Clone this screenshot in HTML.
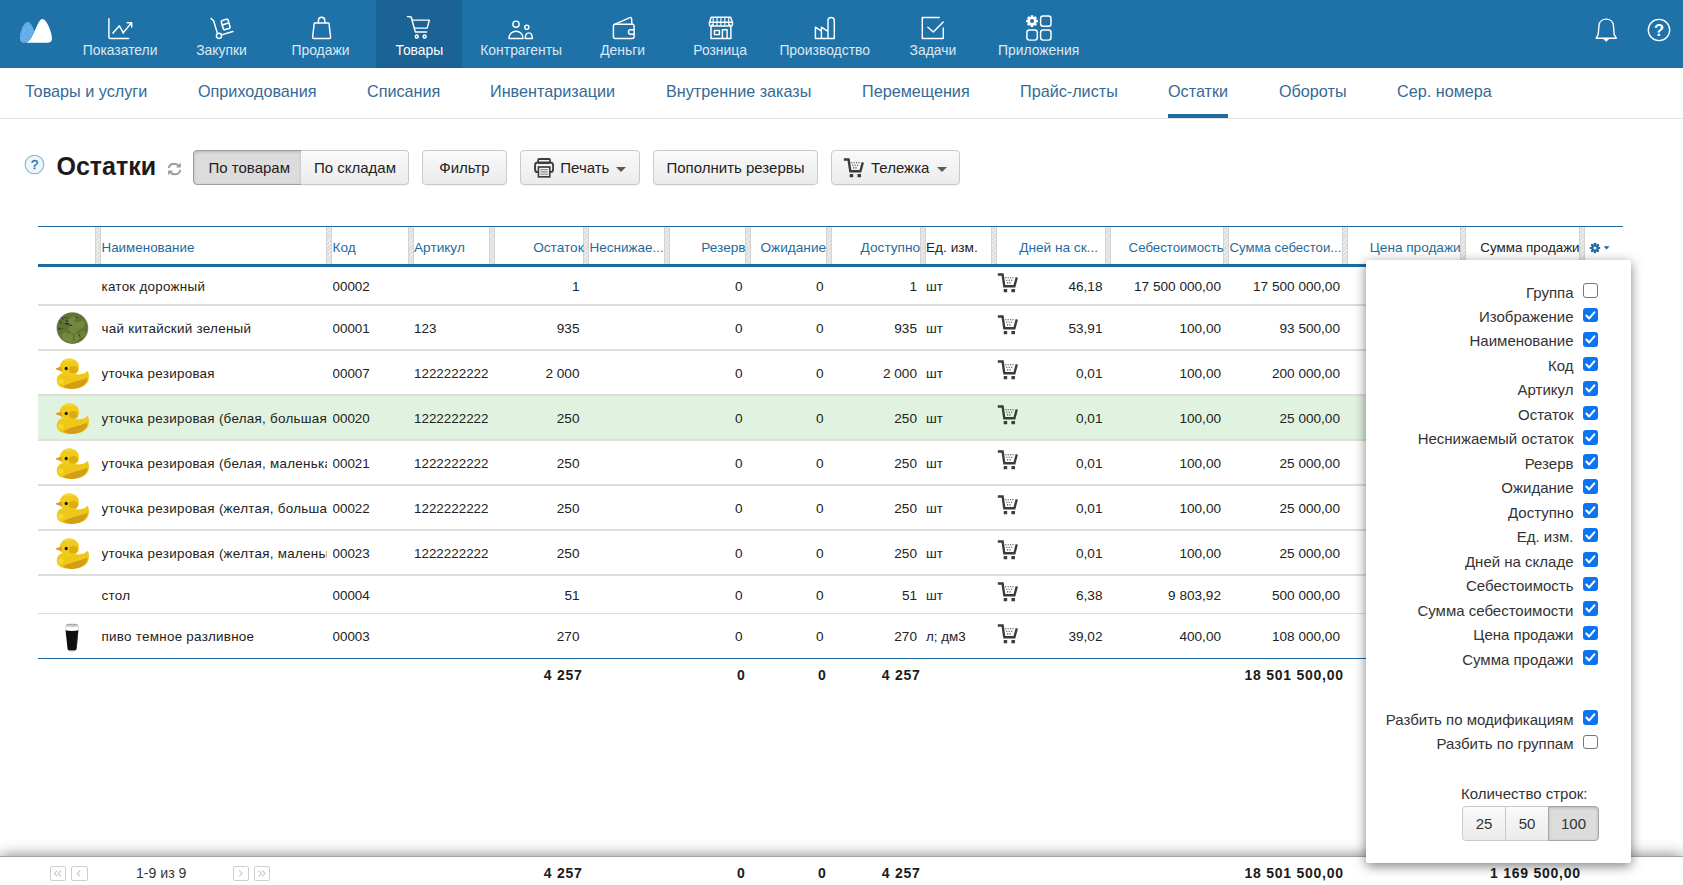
<!DOCTYPE html>
<html lang="ru">
<head>
<meta charset="utf-8">
<title>Остатки</title>
<style>
*{box-sizing:border-box}
html,body{margin:0;padding:0}
body{width:1683px;height:885px;overflow:hidden;background:#fff;font-family:"Liberation Sans",sans-serif;color:#222;position:relative}
/* ---------- top header ---------- */
#hdr{position:absolute;left:0;top:0;width:1683px;height:68px;background:#1f72a8}
.nl{position:absolute;top:42px;width:120px;height:16px;line-height:16px;color:#dbe9f3;font-size:13.9px;text-align:center;white-space:nowrap}
.nl.a{color:#fff}
#ico{position:absolute;left:0;top:0}
/* ---------- sub nav ---------- */
#sub{position:absolute;left:0;top:68px;width:1683px;height:51px;border-bottom:1px solid #e4e4e4;background:#fff}
#sub a{position:absolute;top:13px;font-size:16.2px;line-height:20px;color:#356a95;white-space:nowrap;text-decoration:none}
#sub i{position:absolute;left:1168px;top:46px;width:60px;height:4px;background:#1f6b9d}
/* ---------- toolbar ---------- */
#ttl{position:absolute;left:56.5px;top:151px;font-size:25px;font-weight:bold;line-height:30px;color:#1b1b1b}
.btn{position:absolute;top:150px;height:35px;border:1px solid #c9c9c9;border-radius:4px;background:linear-gradient(#fafafa,#ebebeb);font-size:15px;line-height:33px;color:#222;text-align:center;white-space:nowrap;box-shadow:0 1px 0 rgba(0,0,0,.04)}
.btn.on{background:#dcdcdc;border-color:#9d9d9d;box-shadow:inset 0 1px 3px rgba(0,0,0,.18)}
.caret{display:inline-block;width:0;height:0;border-left:5.6px solid transparent;border-right:5.6px solid transparent;border-top:5.4px solid #5a5a5a;vertical-align:middle;margin-left:6px;margin-top:2px}
/* ---------- table ---------- */
#tb{position:absolute;left:38px;top:226px;width:1585px;font-size:13.4px}
#th{position:absolute;left:0;top:0;width:1585px;height:41px;border-top:1px solid #1f6b9d;border-bottom:3px solid #1f6b9d}
.h{position:absolute;top:0;height:37px;line-height:42px;color:#1f6b9d;white-space:nowrap;overflow:hidden;font-size:13.65px}
.h.k{color:#222}
.sp{position:absolute;top:0;height:37px;width:6px;margin-left:-1px;border:1px solid #d3d3d3;border-top:0;border-bottom:0;background:repeating-linear-gradient(135deg,#efefef 0 1.3px,#dbdbdb 1.3px 2.6px)}
.r{position:absolute;left:0;width:1585px;border-bottom:2px solid #dedede}
.r.g{background:#e0f2e0}
.c{position:absolute;top:0;white-space:nowrap;overflow:hidden;color:#222}
.c.ra{font-size:13.6px}
.ra{text-align:right}
.tot{font-weight:bold;color:#1b1b1b;font-size:14px;letter-spacing:.75px;margin-right:-.75px}
/* ---------- popup ---------- */
#pop{position:absolute;left:1366px;top:260.4px;width:264.5px;height:603px;background:#fff;border:1px solid #fff;border-radius:2px;box-shadow:0 3px 12px rgba(0,0,0,.5);z-index:5}
.o{position:absolute;right:56px;font-size:15px;line-height:18px;color:#333;white-space:nowrap;text-align:right}
.cb{position:absolute;left:216px;width:14.6px;height:14.6px;border-radius:3px}
.cb.y{background:#0b74f0}
.cb.n{border:1.3px solid #767676;background:#fff}
.cb svg{position:absolute;left:0;top:0;width:14.6px;height:14.6px}
.nb{position:absolute;top:544.6px;height:35px;border:1px solid #c9c9c9;background:linear-gradient(#fafafa,#ebebeb);font-size:15px;line-height:33px;color:#333;text-align:center}
.nb.on{background:#dcdcdc;border-color:#a5a5a5;box-shadow:inset 0 1px 3px rgba(0,0,0,.18)}
.im{position:absolute}
/* ---------- footer ---------- */
#ft{position:absolute;left:0;top:857px;width:1683px;height:28px;background:#fff;border-top:1px solid #a3a3a3;margin-top:-1px;height:29px;box-shadow:0 0 15px rgba(0,0,0,.52);z-index:3}
#fsh{display:none}
.pg{position:absolute;top:8.5px;width:15.5px;height:15.5px;border:1px solid #cfcfcf;border-radius:2px;background:#fff}
</style>
</head>
<body>
<div id="hdr">
<div style="position:absolute;left:376px;top:0;width:86px;height:68px;background:#1b6394"></div>
<div class="nl" style="left:60.1px">Показатели</div>
<div class="nl" style="left:161.5px">Закупки</div>
<div class="nl" style="left:260.5px">Продажи</div>
<div class="nl a" style="left:359.4px">Товары</div>
<div class="nl" style="left:461.2px">Контрагенты</div>
<div class="nl" style="left:562.6px">Деньги</div>
<div class="nl" style="left:660.1px">Розница</div>
<div class="nl" style="left:764.7px">Производство</div>
<div class="nl" style="left:872.9px">Задачи</div>
<div class="nl" style="left:978.6px">Приложения</div>
<svg id="ico" width="1683" height="68" viewBox="0 0 1683 68">
<g fill="none" stroke="#fff" stroke-width="1.45" stroke-linecap="round" stroke-linejoin="round">
<!-- logo -->
<path d="M42.5 18.9 C47 18.9 52.3 34 52 38.5 C51.8 42 49.5 42.8 47 42.8 L26 42.8 C30 41 31.5 37.5 34.6 31 C37.5 25 39.5 18.9 42.5 18.9Z" fill="#fff" stroke="none"/>
<path d="M27.5 21.9 C30.5 21.9 33 27 34.4 31 C31.5 37.5 30 41 26 42.8 L24 42.8 C20.5 42.8 19.8 40 19.9 37 C20.2 31 24 21.9 27.5 21.9Z" fill="#62aee9" stroke="none"/>
<!-- chart -->
<path d="M108.9 18.8V36.9C108.9 37.9 109.4 38.4 110.4 38.4H128.6"/>
<circle cx="113.2" cy="32.8" r=".9" fill="#fff" stroke="none"/><circle cx="123.2" cy="32.8" r=".9" fill="#fff" stroke="none"/>
<path d="M113.2 32.7L119.4 25.8L123.2 32.7L131.5 22.9M127.3 22.7H131.7V27"/>
<!-- hand truck -->
<path d="M211 18.4L213.6 20.7L217.3 33"/>
<circle cx="219" cy="35.8" r="2.6"/>
<path d="M221.5 34.9L232.9 31.5"/>
<path d="M222.3 20.4L226.3 19.2C227.2 18.9 227.8 19.3 228.1 20.1L230 26.6C230.3 27.5 229.9 28.1 229.1 28.4L225.1 29.6C224.2 29.9 223.6 29.5 223.3 28.7L221.4 22.2C221.1 21.3 221.5 20.7 222.3 20.4ZM223 24.7L228.4 23.1" stroke-width="1.6"/>
<!-- bag -->
<path d="M314.3 22.9H328.9L330.6 37C330.7 38 330.2 38.5 329.4 38.5H313.8C313 38.5 312.5 38 312.6 37Z"/>
<path d="M318.4 22.7V20.5C318.4 16.2 324.8 16.2 324.8 20.5V22.7"/>
<!-- cart -->
<path d="M407.6 16.6L411.2 17L415.3 31.9H426.6"/>
<path d="M412.3 20.1H429.3L427.2 28.1H414.4"/>
<circle cx="416.8" cy="36.5" r="1.5"/><circle cx="424.6" cy="36.5" r="1.5"/>
<!-- people -->
<circle cx="516" cy="24.2" r="3.1"/>
<path d="M509 38.4C509 28.8 523 28.8 523 38.4Z"/>
<circle cx="526.8" cy="27.3" r="2.1"/>
<path d="M525.3 38.4C525.3 31 532.3 31 532.3 38.4Z"/>
<!-- wallet -->
<path d="M615.3 24.2H632.2C633.4 24.2 634.1 25 634.1 26.2V36.4C634.1 37.6 633.4 38.4 632.2 38.4H615.3C614.1 38.4 613.4 37.6 613.4 36.4V26.2C613.4 25 614.1 24.2 615.3 24.2Z"/>
<path d="M614 24.6L629.8 17.6C630.8 17.2 631.5 17.7 631.6 18.7L631.9 24"/>
<path d="M634 29.8H630.6C627.8 29.8 627.8 34.2 630.6 34.2H634"/>
<!-- store -->
<path d="M711.2 17.3H730.6L732.5 22.5V24.5C732.5 26.6 729.6 26.6 729.6 24.5M709.4 22.5L711.2 17.3M709.4 22.5V24.5C709.4 26.6 712.3 26.6 712.3 24.5"/>
<path d="M709.6 22.3H732.3"/>
<path d="M713.2 17.5V25M717 17.5V25M720.9 17.5V25M724.8 17.5V25M728.7 17.5V25" stroke-width="1.1"/>
<path d="M711 26.2V38.4H730.9V26.2M711 26H730.9"/>
<path d="M714.4 30.4H719.4V34.6H714.4ZM722.4 38.2V29.7H727.1V38.2"/>
<!-- factory -->
<path d="M815.4 38.4V27.2L821.4 31.2V27.2L828 31.4V20.6C828 16.4 834.3 16.4 834.3 20.6V38.4ZM821.4 31.2V38.2M828 31.4V38.2"/>
<!-- tasks -->
<path d="M939.3 17.4H922.3V38.4H943.3V28"/>
<path d="M927.9 27.3L933.3 32L943.2 22"/>
<!-- apps -->
<rect x="1040.6" y="15.9" width="10.4" height="10.4" rx="2.5"/>
<rect x="1026.9" y="29.9" width="10.4" height="10.2" rx="2.5"/>
<rect x="1040.6" y="29.9" width="10.4" height="10.2" rx="2.5"/>
<!-- bell -->
<path d="M1596.2 38.2L1598.2 34.5L1599 25.5C1599.6 17 1612.8 17 1613.4 25.5L1614.2 34.5L1616.4 38.2Z" stroke-width="1.4"/>
<path d="M1603.6 39L1606.2 41.4L1608.8 39Z" fill="#fff" stroke-width=".6"/>
<!-- help -->
<circle cx="1659" cy="30" r="10.7" stroke-width="1.35"/>
</g>
<!-- gear -->
<g transform="translate(1032 21.1)" fill="#fff">
<circle r="4.4"/>
<g id="gt"><rect x="-1.35" y="-5.8" width="2.7" height="11.6" rx=".4"/></g>
<use href="#gt" transform="rotate(45)"/><use href="#gt" transform="rotate(90)"/><use href="#gt" transform="rotate(135)"/>
<circle r="2" fill="#1f72a8"/>
</g>
<g fill="#b9dbf4">
<circle cx="28.5" cy="27.5" r=".45"/><circle cx="24.5" cy="30.5" r=".45"/><circle cx="30.5" cy="31.5" r=".45"/><circle cx="27.5" cy="32.5" r=".45"/>
<circle cx="23.5" cy="33.5" r=".45"/><circle cx="30.5" cy="34.5" r=".45"/><circle cx="25.5" cy="36.5" r=".45"/><circle cx="22.5" cy="38.5" r=".45"/><circle cx="26.5" cy="40.5" r=".45"/>
</g>
<text x="1659" y="35.8" text-anchor="middle" font-family="Liberation Sans, sans-serif" font-weight="bold" font-size="16.5" fill="#fff">?</text>
</svg>
</div>
<div id="sub">
<a style="left:25px">Товары и услуги</a>
<a style="left:198px">Оприходования</a>
<a style="left:367px">Списания</a>
<a style="left:490px">Инвентаризации</a>
<a style="left:666px">Внутренние заказы</a>
<a style="left:862px">Перемещения</a>
<a style="left:1020px">Прайс-листы</a>
<a style="left:1168px">Остатки</a>
<a style="left:1279px">Обороты</a>
<a style="left:1397px">Сер. номера</a>
<i></i>
</div>
<svg style="position:absolute;left:24px;top:154px" width="21" height="21" viewBox="0 0 21 21"><circle cx="10.5" cy="10.5" r="9.3" fill="#edf6fc" stroke="#7eb6d8" stroke-width="1.1"/><text x="10.5" y="15" text-anchor="middle" font-family="Liberation Sans, sans-serif" font-size="13" fill="#1f6b9d" stroke="#1f6b9d" stroke-width=".3">?</text></svg>
<div id="ttl">Остатки</div>
<svg style="position:absolute;left:167px;top:162px" width="15" height="14" viewBox="0 0 15 14"><g fill="none" stroke="#9a9a9a" stroke-width="1.9"><path d="M1.7 6.2C2.2 3.4 4.6 1.7 7.3 1.7C9.3 1.7 10.9 2.6 12 4.1"/><path d="M13.3 7.8C12.8 10.6 10.4 12.3 7.7 12.3C5.7 12.3 4.1 11.4 3 9.9"/></g><path d="M13.8 .8V5.6H9Z" fill="#9a9a9a"/><path d="M1.2 13.2V8.4H6Z" fill="#9a9a9a"/></svg>
<div class="btn on" style="left:193px;width:108.5px;border-radius:4px 0 0 4px;padding-left:4px">По товарам</div>
<div class="btn" style="left:301px;width:108px;border-radius:0 4px 4px 0;border-left:0;padding-left:1px">По складам</div>
<div class="btn" style="left:422px;width:85px">Фильтр</div>
<div class="btn" style="left:520px;width:120px"><svg style="position:absolute;left:13px;top:7px" width="20.2" height="20" viewBox="0 0 21 20" preserveAspectRatio="none"><g fill="none" stroke="#3e3e3e"><rect x="4.3" y="1" width="12.4" height="4" rx="1" stroke-width="1.8"/><rect x="1.1" y="4.6" width="18.8" height="9.4" rx="2.6" stroke-width="2"/><rect x="4.6" y="9" width="11.8" height="9.8" fill="#f3f3f3" stroke-width="1.7"/><path d="M6.6 11.7H14.4M6.6 13.9H14.4M6.6 16.1H14.4" stroke="#777" stroke-width="1"/></g></svg><span style="position:absolute;left:39.3px;top:0">Печать</span><i class="caret" style="position:absolute;left:88.5px;top:14px"></i></div>
<div class="btn" style="left:653px;width:165px">Пополнить резервы</div>
<div class="btn" style="left:831px;width:129px"><span style="position:absolute;left:11.4px;top:7px;line-height:0"><svg width="21" height="20" viewBox="0 0 21 20"><path d="M.8 1.5H5.6L7.3 13.2H17.4L19.8 4.4" fill="none" stroke="#3a3a3a" stroke-width="2.35" stroke-linejoin="miter"/><path d="M8.2 4.7H17M9.2 7.2H16M10 9.8H14.6" fill="none" stroke="#444" stroke-width="1.15" stroke-dasharray="1.2 1.2"/><rect x="6.7" y="15.9" width="3.5" height="3.4" rx=".4" fill="#3c3c3c"/><rect x="14.4" y="15.9" width="3.6" height="3.4" rx=".4" fill="#3c3c3c"/></svg></span><span style="position:absolute;left:39px;top:0">Тележка</span><i class="caret" style="position:absolute;left:98.5px;top:14px"></i></div>
<svg width="0" height="0" style="position:absolute"><defs>
<radialGradient id="tg" cx="45%" cy="40%" r="60%"><stop offset="0" stop-color="#77803f"/><stop offset=".7" stop-color="#69733c"/><stop offset="1" stop-color="#5b6438"/></radialGradient>
<g id="tea"><circle cx="16.4" cy="16.1" r="15.9" fill="#8e9480"/><circle cx="16.4" cy="16.1" r="15.3" fill="#5f7332"/>
<path d="M13 7L17 4L20 7L18 10L24 10L27 8L29 12L27 16L22 18L19 22L16 21L12 17L14 13L12 10Z" fill="#73863f"/>
<path d="M5 23L9 20L13 22L17 20L21 22L24 26L20 30L14 31L8 28Z" fill="#75883f"/>
<path d="M24 20L28 18L30 22L27 26L24 24Z" fill="#6f823b"/>
<path d="M17 21H18.4V29H17Z" fill="#5a6c30"/>
<g fill="#2b3124"><rect x="6" y="5.4" width="1.2" height="2"/><rect x="8.2" y="4.8" width="1.2" height="1"/><rect x="10" y="5.8" width="1.2" height="1"/><rect x="3.4" y="8.8" width="1.8" height="1"/><rect x="4.4" y="11" width="1.1" height="1"/><rect x="10" y="7.8" width="1.2" height="1.8"/><rect x="11" y="9" width="1.1" height="1"/><rect x="9.2" y="11" width="3.8" height="1.6"/><rect x="13.2" y="12.8" width="2.8" height="1"/><rect x="2.6" y="15.8" width="1.8" height="1.8"/><rect x="5.6" y="16" width="1" height="1"/><rect x="20" y="5" width="1.2" height="1.2"/><rect x="23" y="23" width="1.2" height="1.2"/></g></g>
<radialGradient id="dg" cx="45%" cy="35%" r="70%"><stop offset="0" stop-color="#ffe23c"/><stop offset=".65" stop-color="#f3c416"/><stop offset="1" stop-color="#c99708"/></radialGradient>
<g id="duck">
<path d="M6 16.5C1.5 18.5 .6 24.5 3.4 28.3C5.8 31 11 31.9 17 31.9C25 31.9 31.3 29 33.2 24C34.5 20.5 34.2 16.2 32.6 13.8C30.5 16.4 26.5 17.8 22 17.3Z" fill="#efc716"/>
<path d="M8 29.6C13.5 25.3 24 24.6 32.2 20.5C33.5 25.5 27 31.9 17 31.9C13 31.9 10 31.2 8 29.6Z" fill="#d39d19"/>
<path d="M3.6 22.5C5.5 20.6 8.5 21.5 8.8 24C9 26.3 6 28 4 26.6C2.8 25.6 2.7 23.6 3.6 22.5Z" fill="#f6db3c" opacity=".8"/>
<ellipse cx="14.4" cy="10.2" rx="9.6" ry="9" fill="#f1cb1a"/>
<path d="M8 3.5C11 1 17 1 20.5 3.6C16 4.5 11 5 8 3.5Z" fill="#f6da3a" opacity=".7"/>
<ellipse cx="18.4" cy="12.8" rx="4.5" ry="3.7" fill="#dfaa14"/>
<path d="M6.3 9.6L1.2 11.2C.6 11.5 .6 12.2 1.3 12.5L7.2 14.6Z" fill="#dc9a22"/>
<ellipse cx="11.2" cy="11.5" rx="1.55" ry="1.7" fill="#15130c"/>
</g>
<linearGradient id="bg1" x1="0" x2="1"><stop offset="0" stop-color="#2a2222"/><stop offset=".5" stop-color="#0a0808"/><stop offset="1" stop-color="#2a2020"/></linearGradient>
<g id="beer"><path d="M.5 2.2L.4 7.2M13.5 2.2L13.6 7.2" stroke="#d6d6d6" stroke-width=".8" fill="none"/>
<ellipse cx="7" cy="2.3" rx="6.6" ry="1.9" fill="#d2d2d2"/><path d="M1.6 2C3.6 1 6 1.2 7.4 2.1C9 1.1 11 1.2 12.4 2.2" stroke="#8f8f8f" stroke-width=".8" fill="none"/>
<path d="M3.4 25.5C3.6 28.6 10.2 28.6 10.6 25.5Z" fill="#c9c9c9"/>
<path d="M.55 7.1Q7 8.5 13.4 7.1L11.5 25.4Q11.3 26.3 10.2 26.3H3.8Q2.8 26.3 2.6 25.4Z" fill="#100f0e"/>
<path d="M12.6 10L11.4 24" stroke="#3a3636" stroke-width=".6" fill="none"/></g>
</defs></svg>
<div id="tb">
<div id="th">
<div class="sp" style="left:58.0px"></div>
<div class="sp" style="left:289.0px"></div>
<div class="sp" style="left:370.5px"></div>
<div class="sp" style="left:451.5px"></div>
<div class="sp" style="left:546.0px"></div>
<div class="sp" style="left:627.0px"></div>
<div class="sp" style="left:708.0px"></div>
<div class="sp" style="left:788.5px"></div>
<div class="sp" style="left:882.5px"></div>
<div class="sp" style="left:954.0px"></div>
<div class="sp" style="left:1068.0px"></div>
<div class="sp" style="left:1186.0px"></div>
<div class="sp" style="left:1305.0px"></div>
<div class="sp" style="left:1423.0px"></div>
<div class="sp" style="left:1542.0px"></div>
<div class="h" style="left:63.5px;width:225.5px;font-size:13.4px;">Наименование</div>
<div class="h" style="left:294.5px;width:76.0px;">Код</div>
<div class="h" style="left:376.0px;width:75.5px;">Артикул</div>
<div class="h" style="left:457.0px;width:89.0px;text-align:right;padding-right:.4px;">Остаток</div>
<div class="h" style="left:551.5px;width:75.5px;font-size:13.5px;">Неснижае...</div>
<div class="h" style="left:632.5px;width:75.5px;text-align:right;padding-right:.4px;">Резерв</div>
<div class="h" style="left:713.5px;width:75.0px;text-align:right;padding-right:.4px;">Ожидание</div>
<div class="h" style="left:794.0px;width:88.5px;text-align:right;padding-right:.4px;">Доступно</div>
<div class="h k" style="left:888.0px;width:66.0px;">Ед. изм.</div>
<div class="h" style="left:959.5px;width:108.5px;text-align:right;padding-right:8px;">Дней на ск...</div>
<div class="h" style="left:1073.5px;width:112.5px;text-align:right;padding-right:.4px;font-size:13.25px;">Себестоимость</div>
<div class="h" style="left:1191.5px;width:113.5px;font-size:13.2px;">Сумма себестои...</div>
<div class="h" style="left:1310.5px;width:112.5px;text-align:right;padding-right:.4px;font-size:13.6px;">Цена продажи</div>
<div class="h k" style="left:1428.5px;width:113.5px;text-align:right;padding-right:.4px;font-size:13.4px;">Сумма продажи</div>
<svg style="position:absolute;left:1551px;top:15px" width="22" height="12" viewBox="0 0 22 12"><g transform="translate(6 6)" fill="#1f6b9d"><circle r="3.6"/><g id="g2"><rect x="-1.1" y="-5.2" width="2.2" height="10.4" rx=".4"/></g><use href="#g2" transform="rotate(45)"/><use href="#g2" transform="rotate(90)"/><use href="#g2" transform="rotate(135)"/><circle r="1.5" fill="#fff"/></g><path d="M14.6 4.3H20.6L17.6 7.6Z" fill="#1f6b9d"/></svg>
</div>
<div class="r" style="top:41px;height:39px;">
<div class="c" style="left:63.5px;width:225.5px;height:37px;line-height:39px;letter-spacing:.28px;">каток дорожный</div>
<div class="c" style="left:294.5px;width:76.0px;height:37px;line-height:39px;">00002</div>
<div class="c" style="left:376.0px;width:75.5px;height:37px;line-height:39px;"></div>
<div class="c ra" style="left:457.0px;width:89.0px;height:37px;line-height:39px;padding-right:4.5px;">1</div>
<div class="c ra" style="left:632.5px;width:75.5px;height:37px;line-height:39px;padding-right:3.5px;">0</div>
<div class="c ra" style="left:713.5px;width:75.0px;height:37px;line-height:39px;padding-right:3px;">0</div>
<div class="c ra" style="left:794.0px;width:88.5px;height:37px;line-height:39px;padding-right:3.5px;">1</div>
<div class="c" style="left:888.0px;width:66.0px;height:37px;line-height:39px;">шт</div>
<span style="position:absolute;left:958.8px;top:6.0px;line-height:0"><svg width="21" height="20" viewBox="0 0 21 20"><path d="M.8 1.5H5.6L7.3 13.2H17.4L19.8 4.4" fill="none" stroke="#3a3a3a" stroke-width="2.35" stroke-linejoin="miter"/><path d="M8.2 4.7H17M9.2 7.2H16M10 9.8H14.6" fill="none" stroke="#444" stroke-width="1.15" stroke-dasharray="1.2 1.2"/><rect x="6.7" y="15.9" width="3.5" height="3.4" rx=".4" fill="#3c3c3c"/><rect x="14.4" y="15.9" width="3.6" height="3.4" rx=".4" fill="#3c3c3c"/></svg></span>
<div class="c ra" style="left:959.5px;width:108.5px;height:37px;line-height:39px;padding-right:3.5px;">46,18</div>
<div class="c ra" style="left:1073.5px;width:112.5px;height:37px;line-height:39px;padding-right:3px;">17 500 000,00</div>
<div class="c ra" style="left:1191.5px;width:113.5px;height:37px;line-height:39px;padding-right:3px;">17 500 000,00</div>
</div>
<div class="r" style="top:80px;height:45px;">
<svg class="im" style="left:18px;top:6px" width="33" height="33" viewBox="0 0 33 33"><use href="#tea"/></svg>
<div class="c" style="left:63.5px;width:225.5px;height:43px;line-height:45px;letter-spacing:.28px;">чай китайский зеленый</div>
<div class="c" style="left:294.5px;width:76.0px;height:43px;line-height:45px;">00001</div>
<div class="c" style="left:376.0px;width:75.5px;height:43px;line-height:45px;">123</div>
<div class="c ra" style="left:457.0px;width:89.0px;height:43px;line-height:45px;padding-right:4.5px;">935</div>
<div class="c ra" style="left:632.5px;width:75.5px;height:43px;line-height:45px;padding-right:3.5px;">0</div>
<div class="c ra" style="left:713.5px;width:75.0px;height:43px;line-height:45px;padding-right:3px;">0</div>
<div class="c ra" style="left:794.0px;width:88.5px;height:43px;line-height:45px;padding-right:3.5px;">935</div>
<div class="c" style="left:888.0px;width:66.0px;height:43px;line-height:45px;">шт</div>
<span style="position:absolute;left:958.8px;top:9.0px;line-height:0"><svg width="21" height="20" viewBox="0 0 21 20"><path d="M.8 1.5H5.6L7.3 13.2H17.4L19.8 4.4" fill="none" stroke="#3a3a3a" stroke-width="2.35" stroke-linejoin="miter"/><path d="M8.2 4.7H17M9.2 7.2H16M10 9.8H14.6" fill="none" stroke="#444" stroke-width="1.15" stroke-dasharray="1.2 1.2"/><rect x="6.7" y="15.9" width="3.5" height="3.4" rx=".4" fill="#3c3c3c"/><rect x="14.4" y="15.9" width="3.6" height="3.4" rx=".4" fill="#3c3c3c"/></svg></span>
<div class="c ra" style="left:959.5px;width:108.5px;height:43px;line-height:45px;padding-right:3.5px;">53,91</div>
<div class="c ra" style="left:1073.5px;width:112.5px;height:43px;line-height:45px;padding-right:3px;">100,00</div>
<div class="c ra" style="left:1191.5px;width:113.5px;height:43px;line-height:45px;padding-right:3px;">93 500,00</div>
</div>
<div class="r" style="top:125px;height:45px;">
<svg class="im" style="left:17px;top:6px" width="35" height="32" viewBox="0 0 35 32"><use href="#duck"/></svg>
<div class="c" style="left:63.5px;width:225.5px;height:43px;line-height:45px;letter-spacing:.28px;">уточка резировая</div>
<div class="c" style="left:294.5px;width:76.0px;height:43px;line-height:45px;">00007</div>
<div class="c" style="left:376.0px;width:75.5px;height:43px;line-height:45px;">1222222222</div>
<div class="c ra" style="left:457.0px;width:89.0px;height:43px;line-height:45px;padding-right:4.5px;">2 000</div>
<div class="c ra" style="left:632.5px;width:75.5px;height:43px;line-height:45px;padding-right:3.5px;">0</div>
<div class="c ra" style="left:713.5px;width:75.0px;height:43px;line-height:45px;padding-right:3px;">0</div>
<div class="c ra" style="left:794.0px;width:88.5px;height:43px;line-height:45px;padding-right:3.5px;">2 000</div>
<div class="c" style="left:888.0px;width:66.0px;height:43px;line-height:45px;">шт</div>
<span style="position:absolute;left:958.8px;top:9.0px;line-height:0"><svg width="21" height="20" viewBox="0 0 21 20"><path d="M.8 1.5H5.6L7.3 13.2H17.4L19.8 4.4" fill="none" stroke="#3a3a3a" stroke-width="2.35" stroke-linejoin="miter"/><path d="M8.2 4.7H17M9.2 7.2H16M10 9.8H14.6" fill="none" stroke="#444" stroke-width="1.15" stroke-dasharray="1.2 1.2"/><rect x="6.7" y="15.9" width="3.5" height="3.4" rx=".4" fill="#3c3c3c"/><rect x="14.4" y="15.9" width="3.6" height="3.4" rx=".4" fill="#3c3c3c"/></svg></span>
<div class="c ra" style="left:959.5px;width:108.5px;height:43px;line-height:45px;padding-right:3.5px;">0,01</div>
<div class="c ra" style="left:1073.5px;width:112.5px;height:43px;line-height:45px;padding-right:3px;">100,00</div>
<div class="c ra" style="left:1191.5px;width:113.5px;height:43px;line-height:45px;padding-right:3px;">200 000,00</div>
</div>
<div class="r g" style="top:170px;height:45px;">
<svg class="im" style="left:17px;top:6px" width="35" height="32" viewBox="0 0 35 32"><use href="#duck"/></svg>
<div class="c" style="left:63.5px;width:225.5px;height:43px;line-height:45px;letter-spacing:.28px;">уточка резировая (белая, большая)</div>
<div class="c" style="left:294.5px;width:76.0px;height:43px;line-height:45px;">00020</div>
<div class="c" style="left:376.0px;width:75.5px;height:43px;line-height:45px;">1222222222</div>
<div class="c ra" style="left:457.0px;width:89.0px;height:43px;line-height:45px;padding-right:4.5px;">250</div>
<div class="c ra" style="left:632.5px;width:75.5px;height:43px;line-height:45px;padding-right:3.5px;">0</div>
<div class="c ra" style="left:713.5px;width:75.0px;height:43px;line-height:45px;padding-right:3px;">0</div>
<div class="c ra" style="left:794.0px;width:88.5px;height:43px;line-height:45px;padding-right:3.5px;">250</div>
<div class="c" style="left:888.0px;width:66.0px;height:43px;line-height:45px;">шт</div>
<span style="position:absolute;left:958.8px;top:9.0px;line-height:0"><svg width="21" height="20" viewBox="0 0 21 20"><path d="M.8 1.5H5.6L7.3 13.2H17.4L19.8 4.4" fill="none" stroke="#3a3a3a" stroke-width="2.35" stroke-linejoin="miter"/><path d="M8.2 4.7H17M9.2 7.2H16M10 9.8H14.6" fill="none" stroke="#444" stroke-width="1.15" stroke-dasharray="1.2 1.2"/><rect x="6.7" y="15.9" width="3.5" height="3.4" rx=".4" fill="#3c3c3c"/><rect x="14.4" y="15.9" width="3.6" height="3.4" rx=".4" fill="#3c3c3c"/></svg></span>
<div class="c ra" style="left:959.5px;width:108.5px;height:43px;line-height:45px;padding-right:3.5px;">0,01</div>
<div class="c ra" style="left:1073.5px;width:112.5px;height:43px;line-height:45px;padding-right:3px;">100,00</div>
<div class="c ra" style="left:1191.5px;width:113.5px;height:43px;line-height:45px;padding-right:3px;">25 000,00</div>
</div>
<div class="r" style="top:215px;height:45px;">
<svg class="im" style="left:17px;top:6px" width="35" height="32" viewBox="0 0 35 32"><use href="#duck"/></svg>
<div class="c" style="left:63.5px;width:225.5px;height:43px;line-height:45px;letter-spacing:.28px;">уточка резировая (белая, маленькая)</div>
<div class="c" style="left:294.5px;width:76.0px;height:43px;line-height:45px;">00021</div>
<div class="c" style="left:376.0px;width:75.5px;height:43px;line-height:45px;">1222222222</div>
<div class="c ra" style="left:457.0px;width:89.0px;height:43px;line-height:45px;padding-right:4.5px;">250</div>
<div class="c ra" style="left:632.5px;width:75.5px;height:43px;line-height:45px;padding-right:3.5px;">0</div>
<div class="c ra" style="left:713.5px;width:75.0px;height:43px;line-height:45px;padding-right:3px;">0</div>
<div class="c ra" style="left:794.0px;width:88.5px;height:43px;line-height:45px;padding-right:3.5px;">250</div>
<div class="c" style="left:888.0px;width:66.0px;height:43px;line-height:45px;">шт</div>
<span style="position:absolute;left:958.8px;top:9.0px;line-height:0"><svg width="21" height="20" viewBox="0 0 21 20"><path d="M.8 1.5H5.6L7.3 13.2H17.4L19.8 4.4" fill="none" stroke="#3a3a3a" stroke-width="2.35" stroke-linejoin="miter"/><path d="M8.2 4.7H17M9.2 7.2H16M10 9.8H14.6" fill="none" stroke="#444" stroke-width="1.15" stroke-dasharray="1.2 1.2"/><rect x="6.7" y="15.9" width="3.5" height="3.4" rx=".4" fill="#3c3c3c"/><rect x="14.4" y="15.9" width="3.6" height="3.4" rx=".4" fill="#3c3c3c"/></svg></span>
<div class="c ra" style="left:959.5px;width:108.5px;height:43px;line-height:45px;padding-right:3.5px;">0,01</div>
<div class="c ra" style="left:1073.5px;width:112.5px;height:43px;line-height:45px;padding-right:3px;">100,00</div>
<div class="c ra" style="left:1191.5px;width:113.5px;height:43px;line-height:45px;padding-right:3px;">25 000,00</div>
</div>
<div class="r" style="top:260px;height:45px;">
<svg class="im" style="left:17px;top:6px" width="35" height="32" viewBox="0 0 35 32"><use href="#duck"/></svg>
<div class="c" style="left:63.5px;width:225.5px;height:43px;line-height:45px;letter-spacing:.28px;">уточка резировая (желтая, большая)</div>
<div class="c" style="left:294.5px;width:76.0px;height:43px;line-height:45px;">00022</div>
<div class="c" style="left:376.0px;width:75.5px;height:43px;line-height:45px;">1222222222</div>
<div class="c ra" style="left:457.0px;width:89.0px;height:43px;line-height:45px;padding-right:4.5px;">250</div>
<div class="c ra" style="left:632.5px;width:75.5px;height:43px;line-height:45px;padding-right:3.5px;">0</div>
<div class="c ra" style="left:713.5px;width:75.0px;height:43px;line-height:45px;padding-right:3px;">0</div>
<div class="c ra" style="left:794.0px;width:88.5px;height:43px;line-height:45px;padding-right:3.5px;">250</div>
<div class="c" style="left:888.0px;width:66.0px;height:43px;line-height:45px;">шт</div>
<span style="position:absolute;left:958.8px;top:9.0px;line-height:0"><svg width="21" height="20" viewBox="0 0 21 20"><path d="M.8 1.5H5.6L7.3 13.2H17.4L19.8 4.4" fill="none" stroke="#3a3a3a" stroke-width="2.35" stroke-linejoin="miter"/><path d="M8.2 4.7H17M9.2 7.2H16M10 9.8H14.6" fill="none" stroke="#444" stroke-width="1.15" stroke-dasharray="1.2 1.2"/><rect x="6.7" y="15.9" width="3.5" height="3.4" rx=".4" fill="#3c3c3c"/><rect x="14.4" y="15.9" width="3.6" height="3.4" rx=".4" fill="#3c3c3c"/></svg></span>
<div class="c ra" style="left:959.5px;width:108.5px;height:43px;line-height:45px;padding-right:3.5px;">0,01</div>
<div class="c ra" style="left:1073.5px;width:112.5px;height:43px;line-height:45px;padding-right:3px;">100,00</div>
<div class="c ra" style="left:1191.5px;width:113.5px;height:43px;line-height:45px;padding-right:3px;">25 000,00</div>
</div>
<div class="r" style="top:305px;height:45px;">
<svg class="im" style="left:17px;top:6px" width="35" height="32" viewBox="0 0 35 32"><use href="#duck"/></svg>
<div class="c" style="left:63.5px;width:225.5px;height:43px;line-height:45px;letter-spacing:.28px;">уточка резировая (желтая, маленькая)</div>
<div class="c" style="left:294.5px;width:76.0px;height:43px;line-height:45px;">00023</div>
<div class="c" style="left:376.0px;width:75.5px;height:43px;line-height:45px;">1222222222</div>
<div class="c ra" style="left:457.0px;width:89.0px;height:43px;line-height:45px;padding-right:4.5px;">250</div>
<div class="c ra" style="left:632.5px;width:75.5px;height:43px;line-height:45px;padding-right:3.5px;">0</div>
<div class="c ra" style="left:713.5px;width:75.0px;height:43px;line-height:45px;padding-right:3px;">0</div>
<div class="c ra" style="left:794.0px;width:88.5px;height:43px;line-height:45px;padding-right:3.5px;">250</div>
<div class="c" style="left:888.0px;width:66.0px;height:43px;line-height:45px;">шт</div>
<span style="position:absolute;left:958.8px;top:9.0px;line-height:0"><svg width="21" height="20" viewBox="0 0 21 20"><path d="M.8 1.5H5.6L7.3 13.2H17.4L19.8 4.4" fill="none" stroke="#3a3a3a" stroke-width="2.35" stroke-linejoin="miter"/><path d="M8.2 4.7H17M9.2 7.2H16M10 9.8H14.6" fill="none" stroke="#444" stroke-width="1.15" stroke-dasharray="1.2 1.2"/><rect x="6.7" y="15.9" width="3.5" height="3.4" rx=".4" fill="#3c3c3c"/><rect x="14.4" y="15.9" width="3.6" height="3.4" rx=".4" fill="#3c3c3c"/></svg></span>
<div class="c ra" style="left:959.5px;width:108.5px;height:43px;line-height:45px;padding-right:3.5px;">0,01</div>
<div class="c ra" style="left:1073.5px;width:112.5px;height:43px;line-height:45px;padding-right:3px;">100,00</div>
<div class="c ra" style="left:1191.5px;width:113.5px;height:43px;line-height:45px;padding-right:3px;">25 000,00</div>
</div>
<div class="r" style="top:350px;height:38px;border-bottom:1px solid #dcdcdc;">
<div class="c" style="left:63.5px;width:225.5px;height:37px;line-height:39px;letter-spacing:.28px;">стол</div>
<div class="c" style="left:294.5px;width:76.0px;height:37px;line-height:39px;">00004</div>
<div class="c" style="left:376.0px;width:75.5px;height:37px;line-height:39px;"></div>
<div class="c ra" style="left:457.0px;width:89.0px;height:37px;line-height:39px;padding-right:4.5px;">51</div>
<div class="c ra" style="left:632.5px;width:75.5px;height:37px;line-height:39px;padding-right:3.5px;">0</div>
<div class="c ra" style="left:713.5px;width:75.0px;height:37px;line-height:39px;padding-right:3px;">0</div>
<div class="c ra" style="left:794.0px;width:88.5px;height:37px;line-height:39px;padding-right:3.5px;">51</div>
<div class="c" style="left:888.0px;width:66.0px;height:37px;line-height:39px;">шт</div>
<span style="position:absolute;left:958.8px;top:6.0px;line-height:0"><svg width="21" height="20" viewBox="0 0 21 20"><path d="M.8 1.5H5.6L7.3 13.2H17.4L19.8 4.4" fill="none" stroke="#3a3a3a" stroke-width="2.35" stroke-linejoin="miter"/><path d="M8.2 4.7H17M9.2 7.2H16M10 9.8H14.6" fill="none" stroke="#444" stroke-width="1.15" stroke-dasharray="1.2 1.2"/><rect x="6.7" y="15.9" width="3.5" height="3.4" rx=".4" fill="#3c3c3c"/><rect x="14.4" y="15.9" width="3.6" height="3.4" rx=".4" fill="#3c3c3c"/></svg></span>
<div class="c ra" style="left:959.5px;width:108.5px;height:37px;line-height:39px;padding-right:3.5px;">6,38</div>
<div class="c ra" style="left:1073.5px;width:112.5px;height:37px;line-height:39px;padding-right:3px;">9 803,92</div>
<div class="c ra" style="left:1191.5px;width:113.5px;height:37px;line-height:39px;padding-right:3px;">500 000,00</div>
</div>
<div class="r" style="top:388px;height:45px;border-bottom:1px solid #1f6b9d;">
<svg class="im" style="left:27.4px;top:8.6px" width="14" height="30" viewBox="0 0 14 29" preserveAspectRatio="none"><use href="#beer"/></svg>
<div class="c" style="left:63.5px;width:225.5px;height:44px;line-height:46px;letter-spacing:.28px;">пиво темное разливное</div>
<div class="c" style="left:294.5px;width:76.0px;height:44px;line-height:46px;">00003</div>
<div class="c" style="left:376.0px;width:75.5px;height:44px;line-height:46px;"></div>
<div class="c ra" style="left:457.0px;width:89.0px;height:44px;line-height:46px;padding-right:4.5px;">270</div>
<div class="c ra" style="left:632.5px;width:75.5px;height:44px;line-height:46px;padding-right:3.5px;">0</div>
<div class="c ra" style="left:713.5px;width:75.0px;height:44px;line-height:46px;padding-right:3px;">0</div>
<div class="c ra" style="left:794.0px;width:88.5px;height:44px;line-height:46px;padding-right:3.5px;">270</div>
<div class="c" style="left:888.0px;width:66.0px;height:44px;line-height:46px;">л; дм3</div>
<span style="position:absolute;left:958.8px;top:9.5px;line-height:0"><svg width="21" height="20" viewBox="0 0 21 20"><path d="M.8 1.5H5.6L7.3 13.2H17.4L19.8 4.4" fill="none" stroke="#3a3a3a" stroke-width="2.35" stroke-linejoin="miter"/><path d="M8.2 4.7H17M9.2 7.2H16M10 9.8H14.6" fill="none" stroke="#444" stroke-width="1.15" stroke-dasharray="1.2 1.2"/><rect x="6.7" y="15.9" width="3.5" height="3.4" rx=".4" fill="#3c3c3c"/><rect x="14.4" y="15.9" width="3.6" height="3.4" rx=".4" fill="#3c3c3c"/></svg></span>
<div class="c ra" style="left:959.5px;width:108.5px;height:44px;line-height:46px;padding-right:3.5px;">39,02</div>
<div class="c ra" style="left:1073.5px;width:112.5px;height:44px;line-height:46px;padding-right:3px;">400,00</div>
<div class="c ra" style="left:1191.5px;width:113.5px;height:44px;line-height:46px;padding-right:3px;">108 000,00</div>
</div>
</div>
<div class="tot" style="position:absolute;right:1101.2px;top:667px;line-height:16px;white-space:nowrap;">4 257</div>
<div class="tot" style="position:absolute;right:938.2px;top:667px;line-height:16px;white-space:nowrap;">0</div>
<div class="tot" style="position:absolute;right:857.2px;top:667px;line-height:16px;white-space:nowrap;">0</div>
<div class="tot" style="position:absolute;right:763.2px;top:667px;line-height:16px;white-space:nowrap;">4 257</div>
<div class="tot" style="position:absolute;right:340px;top:667px;line-height:16px;white-space:nowrap;">18 501 500,00</div>
<div id="pop">
<div class="o" style="top:22.2px">Группа</div><div class="cb n" style="top:21.8px"></div>
<div class="o" style="top:46.7px">Изображение</div><div class="cb y" style="top:46.3px"><svg viewBox="0 0 14 14"><path d="M3.2 7.3L5.9 10L10.9 4.2" fill="none" stroke="#fff" stroke-width="2" stroke-linecap="round" stroke-linejoin="round"/></svg></div>
<div class="o" style="top:71.1px">Наименование</div><div class="cb y" style="top:70.7px"><svg viewBox="0 0 14 14"><path d="M3.2 7.3L5.9 10L10.9 4.2" fill="none" stroke="#fff" stroke-width="2" stroke-linecap="round" stroke-linejoin="round"/></svg></div>
<div class="o" style="top:95.6px">Код</div><div class="cb y" style="top:95.2px"><svg viewBox="0 0 14 14"><path d="M3.2 7.3L5.9 10L10.9 4.2" fill="none" stroke="#fff" stroke-width="2" stroke-linecap="round" stroke-linejoin="round"/></svg></div>
<div class="o" style="top:120.1px">Артикул</div><div class="cb y" style="top:119.7px"><svg viewBox="0 0 14 14"><path d="M3.2 7.3L5.9 10L10.9 4.2" fill="none" stroke="#fff" stroke-width="2" stroke-linecap="round" stroke-linejoin="round"/></svg></div>
<div class="o" style="top:144.6px">Остаток</div><div class="cb y" style="top:144.2px"><svg viewBox="0 0 14 14"><path d="M3.2 7.3L5.9 10L10.9 4.2" fill="none" stroke="#fff" stroke-width="2" stroke-linecap="round" stroke-linejoin="round"/></svg></div>
<div class="o" style="top:169.0px">Неснижаемый остаток</div><div class="cb y" style="top:168.6px"><svg viewBox="0 0 14 14"><path d="M3.2 7.3L5.9 10L10.9 4.2" fill="none" stroke="#fff" stroke-width="2" stroke-linecap="round" stroke-linejoin="round"/></svg></div>
<div class="o" style="top:193.5px">Резерв</div><div class="cb y" style="top:193.1px"><svg viewBox="0 0 14 14"><path d="M3.2 7.3L5.9 10L10.9 4.2" fill="none" stroke="#fff" stroke-width="2" stroke-linecap="round" stroke-linejoin="round"/></svg></div>
<div class="o" style="top:218.0px">Ожидание</div><div class="cb y" style="top:217.6px"><svg viewBox="0 0 14 14"><path d="M3.2 7.3L5.9 10L10.9 4.2" fill="none" stroke="#fff" stroke-width="2" stroke-linecap="round" stroke-linejoin="round"/></svg></div>
<div class="o" style="top:242.4px">Доступно</div><div class="cb y" style="top:242.0px"><svg viewBox="0 0 14 14"><path d="M3.2 7.3L5.9 10L10.9 4.2" fill="none" stroke="#fff" stroke-width="2" stroke-linecap="round" stroke-linejoin="round"/></svg></div>
<div class="o" style="top:266.9px">Ед. изм.</div><div class="cb y" style="top:266.5px"><svg viewBox="0 0 14 14"><path d="M3.2 7.3L5.9 10L10.9 4.2" fill="none" stroke="#fff" stroke-width="2" stroke-linecap="round" stroke-linejoin="round"/></svg></div>
<div class="o" style="top:291.4px">Дней на складе</div><div class="cb y" style="top:291.0px"><svg viewBox="0 0 14 14"><path d="M3.2 7.3L5.9 10L10.9 4.2" fill="none" stroke="#fff" stroke-width="2" stroke-linecap="round" stroke-linejoin="round"/></svg></div>
<div class="o" style="top:315.8px">Себестоимость</div><div class="cb y" style="top:315.4px"><svg viewBox="0 0 14 14"><path d="M3.2 7.3L5.9 10L10.9 4.2" fill="none" stroke="#fff" stroke-width="2" stroke-linecap="round" stroke-linejoin="round"/></svg></div>
<div class="o" style="top:340.3px">Сумма себестоимости</div><div class="cb y" style="top:339.9px"><svg viewBox="0 0 14 14"><path d="M3.2 7.3L5.9 10L10.9 4.2" fill="none" stroke="#fff" stroke-width="2" stroke-linecap="round" stroke-linejoin="round"/></svg></div>
<div class="o" style="top:364.8px">Цена продажи</div><div class="cb y" style="top:364.4px"><svg viewBox="0 0 14 14"><path d="M3.2 7.3L5.9 10L10.9 4.2" fill="none" stroke="#fff" stroke-width="2" stroke-linecap="round" stroke-linejoin="round"/></svg></div>
<div class="o" style="top:389.2px">Сумма продажи</div><div class="cb y" style="top:388.8px"><svg viewBox="0 0 14 14"><path d="M3.2 7.3L5.9 10L10.9 4.2" fill="none" stroke="#fff" stroke-width="2" stroke-linecap="round" stroke-linejoin="round"/></svg></div>
<div class="o" style="top:449.2px">Разбить по модификациям</div><div class="cb y" style="top:448.8px"><svg viewBox="0 0 14 14"><path d="M3.2 7.3L5.9 10L10.9 4.2" fill="none" stroke="#fff" stroke-width="2" stroke-linecap="round" stroke-linejoin="round"/></svg></div>
<div class="o" style="top:473.7px">Разбить по группам</div><div class="cb n" style="top:473.3px"></div>
<div class="o" style="top:523.6px;right:42px">Количество строк:</div>
<div class="nb" style="left:95px;width:44px;border-radius:4px 0 0 4px">25</div><div class="nb" style="left:138px;width:44px;border-radius:0">50</div><div class="nb on" style="left:181px;width:51px;border-radius:0 4px 4px 0">100</div>
</div>
<div id="fsh"></div>
<div id="ft">
<div class="pg" style="left:50px;width:15.5px"><svg width="13" height="13" viewBox="0 0 13 13" style="position:absolute;left:0;top:0"><path d="M6.3 3.6L3.6 6.5L6.3 9.4M10 3.6L7.3 6.5L10 9.4" fill="none" stroke="#c4c4c4" stroke-width="1.1"/></svg></div>
<div class="pg" style="left:71px;width:16.5px"><svg width="13" height="13" viewBox="0 0 13 13" style="position:absolute;left:0;top:0"><path d="M8 3.6L5.3 6.5L8 9.4" fill="none" stroke="#c4c4c4" stroke-width="1.1"/></svg></div>
<div class="pg" style="left:233px;width:15.5px"><svg width="13" height="13" viewBox="0 0 13 13" style="position:absolute;left:0;top:0"><path d="M5.3 3.6L8 6.5L5.3 9.4" fill="none" stroke="#c4c4c4" stroke-width="1.1"/></svg></div>
<div class="pg" style="left:254px;width:15.5px"><svg width="13" height="13" viewBox="0 0 13 13" style="position:absolute;left:0;top:0"><path d="M3.6 3.6L6.3 6.5L3.6 9.4M7.3 3.6L10 6.5L7.3 9.4" fill="none" stroke="#c4c4c4" stroke-width="1.1"/></svg></div>
<div style="position:absolute;left:136px;top:8px;font-size:14.1px;line-height:16px;color:#333;white-space:nowrap">1-9 из 9</div>
<div class="tot" style="position:absolute;right:1101.2px;top:8px;line-height:16px;white-space:nowrap">4 257</div>
<div class="tot" style="position:absolute;right:938.2px;top:8px;line-height:16px;white-space:nowrap">0</div>
<div class="tot" style="position:absolute;right:857.2px;top:8px;line-height:16px;white-space:nowrap">0</div>
<div class="tot" style="position:absolute;right:763.2px;top:8px;line-height:16px;white-space:nowrap">4 257</div>
<div class="tot" style="position:absolute;right:340px;top:8px;line-height:16px;white-space:nowrap">18 501 500,00</div>
<div class="tot" style="position:absolute;right:103px;top:8px;line-height:16px;white-space:nowrap">1 169 500,00</div>
</div>
</body>
</html>
